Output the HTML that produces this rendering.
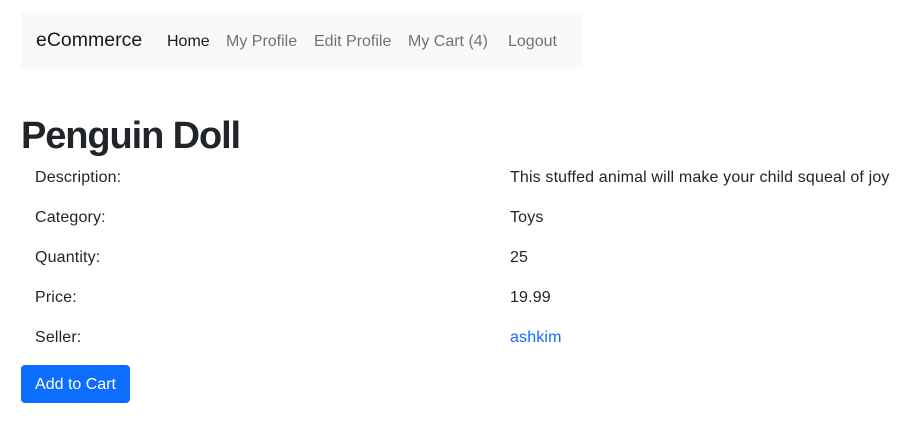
<!DOCTYPE html>
<html><head><meta charset="utf-8"><style>
*{margin:0;padding:0;box-sizing:border-box}
body{width:913px;height:423px;background:#fff;font-family:"Liberation Sans",sans-serif;color:#212529;position:relative;overflow:hidden}
.nav{position:absolute;left:21px;top:13px;width:562px;height:56px;background:#f8f9fa}
.nav span{position:absolute;top:19px;font-size:16px;line-height:19px;color:rgba(0,0,0,.55)}
.nav .brand{left:15px;font-size:19.5px;top:18px;color:rgba(0,0,0,.9)}
.nav .act{color:rgba(0,0,0,.9)}
h1{position:absolute;left:21px;top:113px;font-size:38px;font-weight:bold;line-height:46px;letter-spacing:-1.1px}
.r{position:absolute;font-size:16px;line-height:19px;letter-spacing:0.15px}
.btn{position:absolute;left:21px;top:365px;width:109px;height:38px;background:#0d6efd;color:#fff;border-radius:4px;font-size:16px;line-height:39px;text-align:center}
</style></head><body>
<div class="nav">
<span class="brand">eCommerce</span>
<span class="act" style="left:146px">Home</span>
<span style="left:205px">My Profile</span>
<span style="left:293px">Edit Profile</span>
<span style="left:387px">My Cart (4)</span>
<span style="left:487px">Logout</span>
</div>
<h1>Penguin Doll</h1>
<div class="r" style="left:35px;top:168px">Description:</div><div class="r" style="left:510px;top:168px">This stuffed animal will make your child squeal of joy</div>
<div class="r" style="left:35px;top:208px">Category:</div><div class="r" style="left:510px;top:208px">Toys</div>
<div class="r" style="left:35px;top:248px">Quantity:</div><div class="r" style="left:510px;top:248px">25</div>
<div class="r" style="left:35px;top:288px">Price:</div><div class="r" style="left:510px;top:288px">19.99</div>
<div class="r" style="left:35px;top:328px">Seller:</div><div class="r" style="left:510px;top:328px;color:#0d6efd">ashkim</div>
<div class="btn">Add to Cart</div>
</body></html>
